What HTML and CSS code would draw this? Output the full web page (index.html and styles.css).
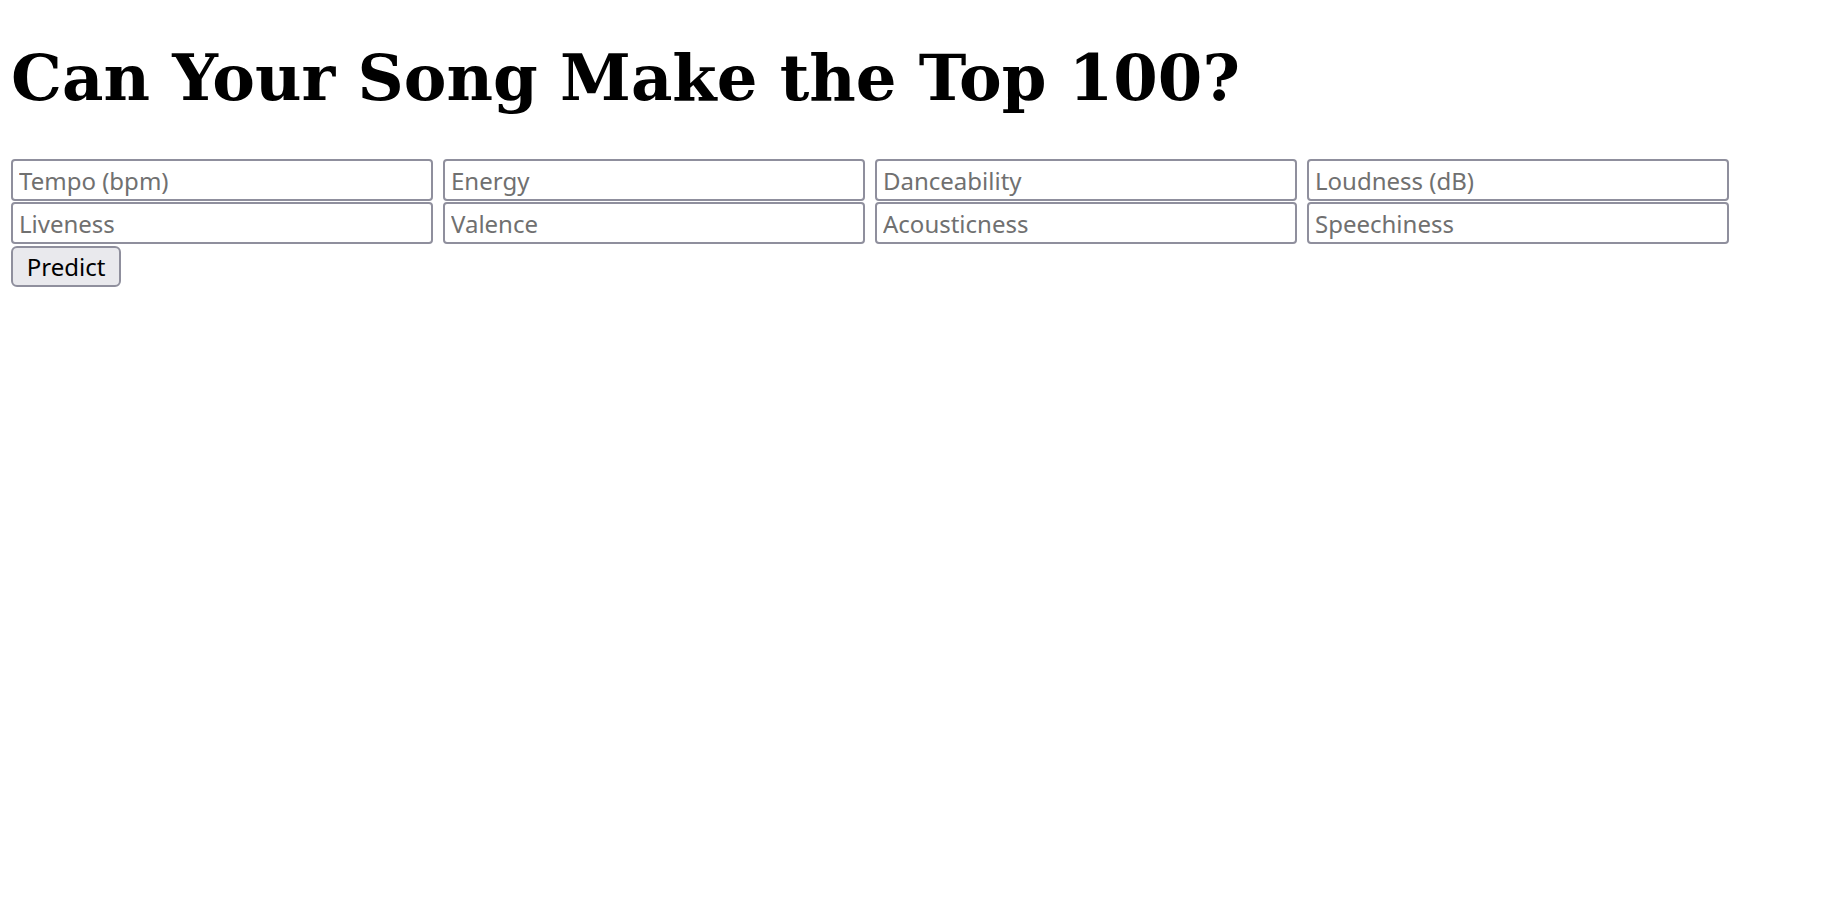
FILE: index.html
```html
<!DOCTYPE html>
<html>
<head>
<meta charset="utf-8">
<title>Top 100 Predictor</title>
<link rel="stylesheet" href="styles.css">
</head>
<body>
<h1 class="title">Can Your Song Make the Top 100?</h1>
<form class="form">
  <div class="fields">
    <input class="field" type="text" placeholder="Tempo (bpm)">
    <input class="field" type="text" placeholder="Energy">
    <input class="field" type="text" placeholder="Danceability">
    <input class="field" type="text" placeholder="Loudness (dB)">
    <input class="field" type="text" placeholder="Liveness">
    <input class="field" type="text" placeholder="Valence">
    <input class="field" type="text" placeholder="Acousticness">
    <input class="field" type="text" placeholder="Speechiness">
  </div>
  <button class="btn" type="button">Predict</button>
</form>
</body>
</html>
```
FILE: styles.css
```css
body {
  margin: 0;
  padding: 0 11px;
  background: #fff;
}
.title {
  font-family: "DejaVu Serif", serif;
  font-weight: bold;
  font-size: 64px;
  margin: 41px 0 44px;
  line-height: 74px;
  color: #000;
}
.form {
  display: flex;
  flex-direction: column;
  align-items: flex-start;
  gap: 2px;
}
.fields {
  display: grid;
  grid-template-columns: repeat(4, 422px);
  column-gap: 10px;
  row-gap: 1px;
}
.field {
  box-sizing: border-box;
  width: 422px;
  height: 42px;
  margin: 0;
  padding: 0 6px;
  border: 2px solid #8f8f9d;
  border-radius: 4px;
  font-family: "Noto Sans", sans-serif;
  font-size: 24px;
  color: #000;
  background: #fff;
}
.field::placeholder {
  color: #707070;
  opacity: 1;
}
.btn {
  box-sizing: border-box;
  height: 41px;
  width: 110px;
  margin: 0;
  padding: 0 4px;
  border: 2px solid #8f8f9d;
  border-radius: 6px;
  background: #e9e9ed;
  font-family: "Noto Sans", sans-serif;
  font-size: 24px;
  color: #000;
}
```
